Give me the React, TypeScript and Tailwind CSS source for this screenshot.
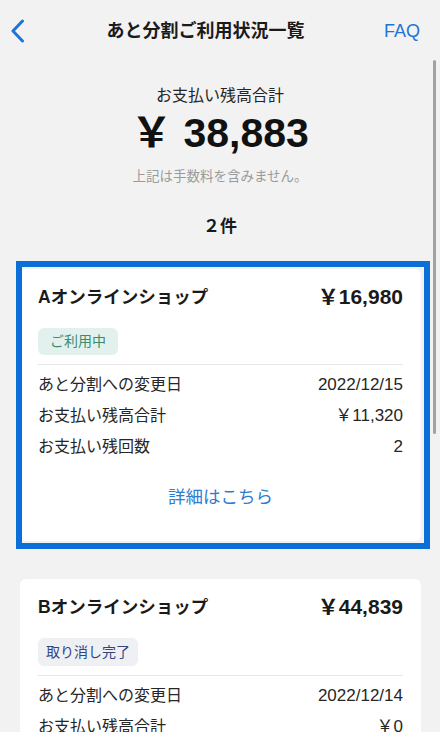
import React from "react";

type Plan = {
	shop: string;
	amount: string;
	status: "active" | "cancelled";
	changedOn: string;
	remaining: string;
	count: string;
	highlight?: boolean;
};

const plans: Plan[] = [
	{
		shop: "Aオンラインショップ",
		amount: "￥16,980",
		status: "active",
		changedOn: "2022/12/15",
		remaining: "￥11,320",
		count: "2",
		highlight: true,
	},
	{
		shop: "Bオンラインショップ",
		amount: "￥44,839",
		status: "cancelled",
		changedOn: "2022/12/14",
		remaining: "￥0",
		count: "0",
	},
];

function StatusBadge({ status }: { status: Plan["status"] }) {
	if (status === "active") {
		return (
			<span className="inline-flex h-[27px] items-center rounded-md bg-[#e3f1ee] px-3 text-[14px] text-[#3a8c6d]">
				ご利用中
			</span>
		);
	}
	return (
		<span className="inline-flex h-[28px] items-center rounded-md bg-[#eef0f3] px-2 text-[14px] text-[#34457e]">
			取り消し完了
		</span>
	);
}

function PlanCard({ plan }: { plan: Plan }) {
	return (
		<div className="relative ml-5 mr-[19px] rounded-md bg-white px-[18px] pt-4 pb-8">
			<div className="flex h-6 items-center justify-between">
				<span className="text-[17.5px] font-bold text-[#1a1a1a]">{plan.shop}</span>
				<span className="text-[21px] font-bold text-[#1a1a1a]">{plan.amount}</span>
			</div>
			<div className="mt-[19px]">
				<StatusBadge status={plan.status} />
			</div>
			<div className="mt-[9px] border-t border-[#e6e6e6] pt-1 text-[16px] text-[#262626]">
				<div className="flex h-[31px] items-center justify-between">
					<span>あと分割への変更日</span>
					<span className="text-[17px]">{plan.changedOn}</span>
				</div>
				<div className="flex h-[31px] items-center justify-between">
					<span>お支払い残高合計</span>
					<span className="text-[17px]">{plan.remaining}</span>
				</div>
				<div className="flex h-[31px] items-center justify-between">
					<span>お支払い残回数</span>
					<span className="text-[17px]">{plan.count}</span>
				</div>
			</div>
			<div className="mt-[23px] text-center text-[17.5px] leading-6 text-[#2f7bd0]">詳細はこちら</div>
			{plan.highlight && (
				<div className="pointer-events-none absolute -top-2 -bottom-2 -left-1 -right-[9px] border-[6px] border-[#0a6fd6]" />
			)}
		</div>
	);
}

export default function App() {
	return (
		<div
			className="relative h-[732px] w-[440px] overflow-hidden bg-[#f2f2f2]"
			style={{ fontFamily: '"Liberation Sans", "Noto Sans CJK JP", sans-serif' }}
		>
			<header className="flex h-[62px] items-center justify-between px-3">
				<svg width="14" height="24" viewBox="0 0 14 24" fill="none" className="ml-[-1px]">
					<path d="M11.5 2L2 12l9.5 10" stroke="#1f74d4" strokeWidth="3" strokeLinecap="round" strokeLinejoin="round" />
				</svg>
				<h1 className="ml-[2px] text-[18px] font-bold text-[#1a1a1a]">あと分割ご利用状況一覧</h1>
				<span className="mr-2 text-[18px] text-[#1f74d4]">FAQ</span>
			</header>

			<section className="flex flex-col items-center">
				<p className="mt-[23px] text-[16px] leading-[22px] text-[#262626]">お支払い残高合計</p>
				<p className="mt-[3px] text-[41px] font-bold leading-[46px] text-[#111]">￥ 38,883</p>
				<p className="mt-[11px] text-[13.5px] leading-5 text-[#9a9a9a]">上記は手数料を含みません。</p>
				<p className="mt-[28px] text-[17px] font-bold leading-6 text-[#1a1a1a]">２件</p>
			</section>

			<div className="mt-[30px] flex flex-col gap-[38px]">
				{plans.map((p) => (
					<PlanCard plan={p} key={p.shop} />
				))}
			</div>

			<div className="absolute top-[60px] right-[4px] h-[374px] w-[3px] rounded-full bg-[#a3a3a3]" />
		</div>
	);
}
